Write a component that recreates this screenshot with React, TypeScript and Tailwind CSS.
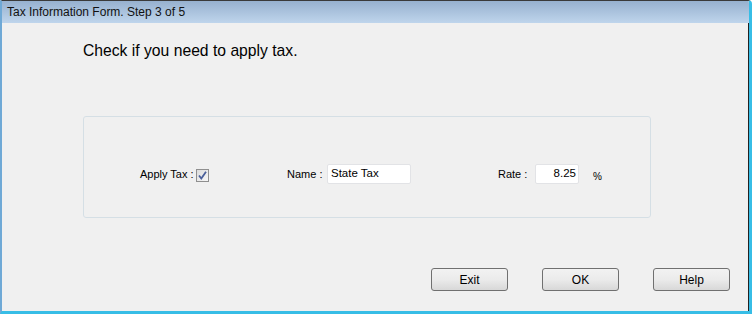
export default function App() {
  const font = { fontFamily: '"Liberation Sans", Arial, sans-serif' };

  return (
    <div
      className="w-[752px] h-[314px] flex flex-col overflow-hidden bg-[#f0f0f0] border-t border-t-[#3a3a3a] border-l-2 border-l-[#6fa9d6] border-r-[3px] border-r-[#37bde6] border-b-[3px] border-b-[#37bde6] rounded-tr-[4px] text-black"
      style={font}
    >
      {/* title bar */}
      <div className="h-[22px] shrink-0 flex items-center pl-[5px] bg-gradient-to-b from-[#97b1cf] to-[#bfd5ec] text-[12px] text-[#111]">
        Tax Information Form. Step 3 of 5
      </div>

      <div className="flex-1 flex flex-col border-r border-r-[#222]">
        <h1 className="ml-[81px] mt-[18px] text-[15.7px] leading-[20px]">Check if you need to apply tax.</h1>

        <div className="ml-[81px] mt-[55px] w-[568px] h-[102px] rounded-[3px] border border-[#d5dfe5] pt-[47px]">
          <div className="flex items-center h-[20px] text-[11px]">
            <div className="w-[203px] pl-[56px] flex items-center">
              <span className="w-[56px] whitespace-nowrap">Apply Tax :</span>
              <span className="mt-[2px] w-[13px] h-[13px] border border-[#8f8f8f] bg-gradient-to-br from-[#dcdcdc] to-[#f7f7f7] flex items-center justify-center">
                <svg width="11" height="11" viewBox="0 0 11 11">
                  <path d="M2 5.5 L4.3 8.5 L9 1.8" fill="none" stroke="#4a5f9a" strokeWidth="1.8" />
                </svg>
              </span>
            </div>
            <div className="w-[211px] flex items-center">
              <span className="w-[40px]">Name :</span>
              <div className="w-[84px] h-[20px] bg-white border border-[#e2e3e6] rounded-[2px] flex items-center pl-[3px] text-[11.5px]">
                State Tax
              </div>
            </div>
            <div className="flex items-center">
              <span className="w-[37px]">Rate :</span>
              <div className="w-[44px] h-[20px] bg-white border border-[#e2e3e6] rounded-[2px] flex items-center justify-end pr-[2px] text-[11.5px]">
                8.25
              </div>
              <span className="ml-[14px] mt-[5px] text-[10px]">%</span>
            </div>
          </div>
        </div>

        <div className="mt-[50px] flex justify-end gap-[34px] pr-[18px] text-[12px]">
          {['Exit', 'OK', 'Help'].map((b) => (
            <button
              key={b}
              className="w-[77px] h-[23px] rounded-[3px] border border-[#707070] bg-gradient-to-b from-[#f2f2f2] via-[#ebebeb] to-[#d8d8d8] flex items-center justify-center"
            >
              {b}
            </button>
          ))}
        </div>
      </div>
    </div>
  );
}
